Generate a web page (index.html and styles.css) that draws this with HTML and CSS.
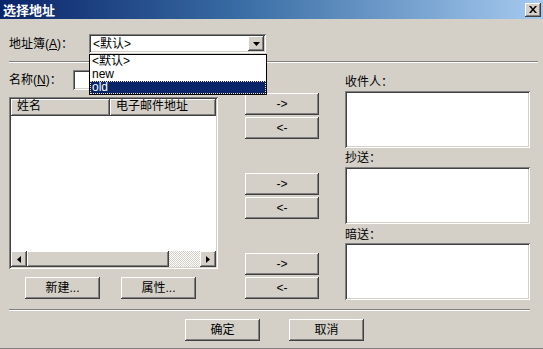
FILE: index.html
```html
<!DOCTYPE html>
<html lang="zh-CN">
<head>
<meta charset="utf-8">
<title>选择地址</title>
<link rel="stylesheet" href="styles.css">
</head>
<body>
<div class="window">
  <div class="titlebar">
    <span class="title">选择地址</span>
    <span class="close raised"><svg width="8" height="7" viewBox="0 0 8 7"><path d="M0 0h2l2 2.5L6 0h2L5 3.5 8 7H6L4 4.5 2 7H0l3-3.5z" fill="#000"/></svg></span>
  </div>
  <div class="content">
    <div class="row-book">
      <span class="label lbl-book">地址簿(<u>A</u>)：</span>
      <div class="combo field">
        <span class="combo-text">&lt;默认&gt;</span>
        <span class="combo-btn raised"><svg width="7" height="4" viewBox="0 0 7 4"><path d="M0 0h7L3.5 4z" fill="#000"/></svg></span>
      </div>
    </div>
    <div class="sep sep-top"></div>
    <div class="main">
      <div class="col-left">
        <div class="row-name">
          <span class="label lbl-name">名称(<u>N</u>)：</span>
          <div class="input field"></div>
        </div>
        <div class="listview field">
          <div class="lv-header">
            <div class="hcell raised c1">姓名</div>
            <div class="hcell raised c2">电子邮件地址</div>
          </div>
          <div class="lv-body"></div>
          <div class="hscroll">
            <span class="sb-btn raised"><svg width="4" height="7" viewBox="0 0 4 7"><path d="M4 0v7L0 3.5z" fill="#000"/></svg></span>
            <span class="sb-thumb raised"></span>
            <span class="sb-track"></span>
            <span class="sb-btn raised"><svg width="4" height="7" viewBox="0 0 4 7"><path d="M0 0v7l4-3.5z" fill="#000"/></svg></span>
          </div>
        </div>
        <div class="btn-row">
          <button class="btn raised">新建...</button>
          <button class="btn raised">属性...</button>
        </div>
      </div>
      <div class="col-mid">
        <div class="pair"><button class="btn raised arrow">-&gt;</button><button class="btn raised arrow">&lt;-</button></div>
        <div class="pair"><button class="btn raised arrow">-&gt;</button><button class="btn raised arrow">&lt;-</button></div>
        <div class="pair"><button class="btn raised arrow">-&gt;</button><button class="btn raised arrow">&lt;-</button></div>
      </div>
      <div class="col-right">
        <div class="label rlabel r1">收件人：</div>
        <div class="rbox field b1"></div>
        <div class="label rlabel r2">抄送：</div>
        <div class="rbox field b2"></div>
        <div class="label rlabel r3">暗送：</div>
        <div class="rbox field b3"></div>
      </div>
    </div>
    <div class="sep sep-bottom"></div>
    <div class="footer">
      <button class="btn raised">确定</button>
      <button class="btn raised">取消</button>
    </div>
  </div>
  <ul class="dropdown">
    <li class="opt">&lt;默认&gt;</li>
    <li class="opt">new</li>
    <li class="opt selected">old</li>
  </ul>
</div>
</body>
</html>
```
FILE: styles.css
```css
* { box-sizing: border-box; }
html, body { margin: 0; padding: 0; }
body {
  width: 543px;
  height: 349px;
  overflow: hidden;
  background: #d4d0c8;
  font-family: "Liberation Sans", "Noto Sans CJK SC", sans-serif;
  font-size: 12px;
  color: #000;
}
.window {
  position: relative;
  width: 543px;
  height: 349px;
  background: #d4d0c8;
  box-shadow: inset 0 -1px #808080;
}
.raised {
  background: #d4d0c8;
  box-shadow: inset -1px -1px #404040, inset 1px 1px #fff, inset -2px -2px #808080, inset 2px 2px #d4d0c8;
}
.field {
  background: #fff;
  box-shadow: inset 1px 1px #808080, inset -1px -1px #fff, inset 2px 2px #404040, inset -2px -2px #d4d0c8;
}
.titlebar {
  height: 19px;
  display: flex;
  align-items: center;
  justify-content: space-between;
  padding: 0 2px 0 3px;
  background: linear-gradient(to right, #0a246a 0%, #3a6ea5 45%, #a6caf0 100%);
}
.title {
  color: #fff;
  font-weight: bold;
  font-size: 13px;
  line-height: 15px;
  font-family: "Noto Sans CJK SC", sans-serif;
}
.close {
  width: 16px;
  height: 14px;
  display: flex;
  align-items: center;
  justify-content: center;
}
.content { padding-left: 9px; }
.label { line-height: 14px; white-space: nowrap; }
.row-book {
  margin-top: 15px;
  height: 19px;
  display: flex;
  align-items: center;
}
.lbl-book { width: 80px; }
.combo {
  width: 177px;
  height: 19px;
  display: flex;
  align-items: center;
  justify-content: space-between;
  padding: 0 2px 0 4px;
}
.combo-text { line-height: 14px; }
.combo-btn {
  width: 16px;
  height: 15px;
  display: flex;
  align-items: center;
  justify-content: center;
}
.sep {
  height: 2px;
  border-top: 1px solid #808080;
  border-bottom: 1px solid #fff;
}
.sep-top { margin-top: 8px; width: 529px; }
.main {
  height: 237px;
  display: grid;
  grid-template-columns: 209px 74px 185px;
  column-gap: 27px;
}
.col-mid { margin-right: -1px; }
.col-left { display: flex; flex-direction: column; }
.row-name {
  margin-top: 7px;
  height: 20px;
  display: flex;
  align-items: center;
}
.lbl-name { width: 64px; }
.input { width: 145px; height: 20px; }
.listview {
  margin-top: 7px;
  width: 209px;
  height: 172px;
  padding: 2px;
  display: flex;
  flex-direction: column;
}
.lv-header { height: 17px; display: flex; }
.hcell {
  height: 17px;
  line-height: 15px;
  padding-left: 6px;
}
.c1 { width: 99px; }
.c2 { width: 106px; }
.lv-body { flex: 1; background: #fff; }
.hscroll { height: 16px; display: flex; }
.sb-btn {
  width: 16px;
  height: 16px;
  display: flex;
  align-items: center;
  justify-content: center;
}
.sb-thumb { width: 142px; height: 16px; }
.sb-track {
  width: 31px;
  height: 16px;
  background: repeating-conic-gradient(#fff 0 25%, #d4d0c8 0 50%) 0 0 / 2px 2px;
}
.btn {
  font: inherit;
  color: #000;
  border: 0;
  margin: 0;
  padding: 0;
  width: 75px;
  height: 22px;
  line-height: 20px;
  text-align: center;
}
.btn-row {
  margin-top: 8px;
  padding-left: 16px;
  display: flex;
  gap: 21px;
}
.col-mid {
  padding-top: 30px;
  display: flex;
  flex-direction: column;
  gap: 34px;
}
.pair { display: flex; flex-direction: column; gap: 2px; }
.arrow { width: 74px; }
.col-right { display: flex; flex-direction: column; margin-left: -1px; }
.rlabel { height: 14px; }
.rbox { width: 185px; height: 57px; }
.r1 { margin-top: 12px; }
.b1 { margin-top: 2px; }
.r2 { margin-top: 3px; }
.b2 { margin-top: 2px; }
.r3 { margin-top: 4px; }
.b3 { margin-top: 1px; }
.sep-bottom { margin-top: 9px; width: 521px; }
.footer {
  margin-top: 8px;
  padding-left: 176px;
  display: flex;
  gap: 29px;
}
.dropdown {
  position: absolute;
  left: 89px;
  top: 54px;
  width: 178px;
  margin: 0;
  padding: 0;
  list-style: none;
  background: #fff;
  border: 1px solid #000;
}
.opt {
  height: 13px;
  line-height: 13px;
  padding-left: 2px;
}
.selected {
  background: #0a246a;
  color: #fff;
  outline: 1px dotted #f5deb3;
  outline-offset: -1px;
}
```
